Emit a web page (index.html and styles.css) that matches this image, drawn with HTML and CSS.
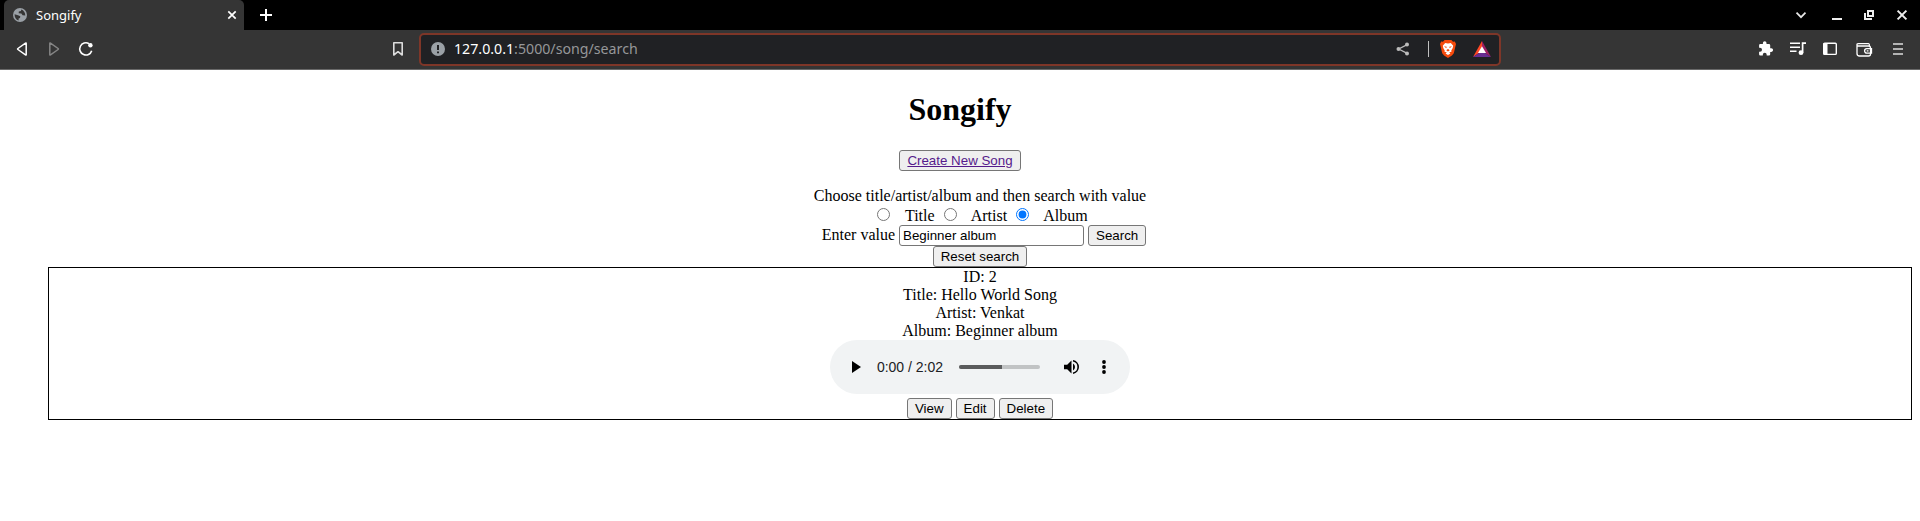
FILE: index.html
```html
<!DOCTYPE html>
<html lang="en">
<head>
<meta charset="utf-8">
<title>Songify</title>
<link rel="stylesheet" href="styles.css">
</head>
<body>
<header class="browser">
  <div class="tabstrip">
    <div class="tab">
      <svg class="favicon" width="14" height="14" viewBox="0 0 14 14"><circle cx="7" cy="7" r="7" fill="#9aa0a6"/><path d="M1.6 6.2 5 7.2 7.3 8.3 7 10 5.600 10.6V12.400C3 11.700 1.500 9.500 1.600 6.200ZM8.200 1.600 8 3 5.800 3.600 5.700 5.200 8.400 5.400 9.600 7.300 12.300 7.500C12.200 4.600 10.700 2.400 8.200 1.600Z" fill="#353535"/></svg>
      <span class="tab-title">Songify</span>
      <svg class="tab-close" width="10" height="10" viewBox="0 0 10 10"><path d="M1.300 1.300 8.700 8.700M8.700 1.300 1.300 8.700" stroke="#fff" stroke-width="1.700"/></svg>
    </div>
    <svg class="new-tab" width="12" height="12" viewBox="0 0 12 12"><path d="M6 0V12M0 6H12" stroke="#fff" stroke-width="2"/></svg>
    <div class="window-controls">
      <svg width="20" height="20" viewBox="0 0 20 20"><path d="M5.500 7.700 10 12.200 14.500 7.700" fill="none" stroke="#e8e8e8" stroke-width="1.700"/></svg>
      <svg width="20" height="20" viewBox="0 0 20 20"><path d="M5 13H15V15H5Z" fill="#eee"/></svg>
      <svg width="20" height="20" viewBox="0 0 20 20"><path d="M9 6H14V11H9ZM6 8V14H13" fill="none" stroke="#eee" stroke-width="2"/></svg>
      <svg width="20" height="20" viewBox="0 0 20 20"><path d="M5.600 5.600 14.400 14.400M14.400 5.600 5.600 14.400" stroke="#eee" stroke-width="2"/></svg>
    </div>
  </div>
  <div class="toolbar">
    <div class="nav">
      <svg width="20" height="20" viewBox="0 0 20 20"><path d="M14.200 4.500V15.500Q14.200 16.300 13.500 15.900L5.900 10.500Q5.200 10 5.900 9.500L13.500 4.100Q14.200 3.700 14.200 4.500Z" fill="none" stroke="#fff" stroke-width="1.500"/></svg>
      <svg width="20" height="20" viewBox="0 0 20 20"><path d="M5.800 4.500V15.500Q5.800 16.300 6.500 15.900L14.100 10.500Q14.800 10 14.100 9.500L6.500 4.100Q5.800 3.700 5.800 4.500Z" fill="none" stroke="#858585" stroke-width="1.500"/></svg>
      <svg width="20" height="20" viewBox="0 0 20 20"><path d="M15.700 11.700A6.100 6.100 0 1 1 13 4.700" fill="none" stroke="#fff" stroke-width="1.600"/><circle cx="14.400" cy="6.200" r="2.200" fill="#fff"/></svg>
    </div>
    <svg class="bookmark" width="20" height="20" viewBox="0 0 20 20"><path d="M5.800 3.800H14.200V16L10 12.700 5.800 16Z" fill="none" stroke="#ddd" stroke-width="1.600" stroke-linejoin="round"/></svg>
    <div class="address">
      <svg class="info" width="14" height="14" viewBox="0 0 14 14"><circle cx="7" cy="7" r="7" fill="#9aa0a6"/><path d="M6 3H8V8H6ZM6 9.400H8V11.300H6Z" fill="#202124"/></svg>
      <span class="url"><span class="host">127.0.0.1</span>:5000/song/search</span>
      <svg class="share" width="14" height="14" viewBox="0 0 14 14"><path d="M11.200 2.600 2.700 7 11.200 11.400" fill="none" stroke="#bbb" stroke-width="1.300"/><g fill="#bbb"><circle cx="11" cy="2.600" r="2"/><circle cx="2.500" cy="7" r="2"/><circle cx="11" cy="11.400" r="2"/></g></svg>
      <span class="divider"></span>
      <svg class="brave" width="16" height="18" viewBox="0 0 16 18"><path d="M4.600 0H11.400L13 1.700 14.800 1.500 16 4 15.500 6 13.800 13.200 11.900 15.400 8 18 4.100 15.400 2.200 13.200.5 6 0 4 1.200 1.500 3 1.700Z" fill="#f54a0c"/><path d="M5.200 3 8 3.500 10.800 3 13.200 5.700 12.700 8 11.300 10.500 11.500 11.800 9.200 12.300 10.400 13.400 8 15 5.600 13.400 6.800 12.300 4.500 11.800 4.700 10.500 3.300 8 2.800 5.700Z" fill="#fff"/><path d="M4 6.300 6.700 6.800 6.300 8.200ZM12 6.300 9.300 6.800 9.700 8.200ZM7.200 9.300H8.800L9.600 10.600 8 11.500 6.400 10.600Z" fill="#f54a0c"/></svg>
      <svg class="rewards" width="18" height="16" viewBox="0 0 18 16"><path d="M9 0 0 16 9 10Z" fill="#ff4724"/><path d="M9 0 18 16 9 10Z" fill="#9e1f63"/><path d="M0 16H18L9 10Z" fill="#662d91"/><path d="M9 5.200 13 12H5Z" fill="#fff"/></svg>
    </div>
    <div class="extensions">
      <svg width="20" height="20" viewBox="0 0 20 20"><path d="M15.300 9.300H14.200V6.300Q14.200 5 12.900 5H10.500V4.100A1.800 1.800 0 0 0 6.900 4.100V5H4.300Q3.100 5 3.100 6.300V8.700H4A2 2 0 0 1 4 12.700H3.100V15.300Q3.100 16.600 4.300 16.600H6.800V15.700A1.950 1.950 0 0 1 10.700 15.700V16.600H12.900Q14.200 16.600 14.200 15.300V12.900H15.300A1.800 1.800 0 0 0 15.300 9.300Z" fill="#fff"/></svg>
      <svg width="20" height="20" viewBox="0 0 20 20"><path d="M2 4.200H12M2 8.200H12M2 12.200H8.500" stroke="#fff" stroke-width="1.400"/><path d="M18 4.200H14.600V13.800" fill="none" stroke="#fff" stroke-width="1.700"/><circle cx="13" cy="13.700" r="2.400" fill="#fff"/></svg>
      <svg width="20" height="20" viewBox="0 0 20 20"><rect x="3.700" y="4.200" width="12.600" height="11.200" rx="1" fill="none" stroke="#fff" stroke-width="1.400"/><path d="M3.500 4H7.500V15.500H3.500Z" fill="#fff"/></svg>
      <svg width="20" height="20" viewBox="0 0 20 20"><path d="M3 6V14.500Q3 17 5.500 17H14.500Q16.500 17 16.500 15.200V9Q16.500 7 14.500 7H4.500Q2.800 7 3 5.200Q3.300 4.700 4.500 4.700H14.500Q15.500 4.700 15.500 6.700M17.500 9.700H12.800A2.200 2.200 0 0 0 12.800 14.100H17.500Z" fill="none" stroke="#fff" stroke-width="1.300"/><path d="M12.700 11.900H14.500" stroke="#fff" stroke-width="1.300"/></svg>
      <svg width="20" height="20" viewBox="0 0 20 20"><path d="M5 5H15M5 10H15M5 15H15" stroke="#ddd" stroke-width="1.600"/></svg>
    </div>
  </div>
</header>
<main class="page">
  <h1 class="heading">Songify</h1>
  <div class="create"><button class="btn"><a class="link" href="#">Create New Song</a></button></div>
  <section class="content">
    <form class="search">
      <div class="row">Choose title/artist/album and then search with value</div>
      <div class="row choices"><input type="radio" name="field"> &nbsp; Title <input type="radio" name="field"> &nbsp; Artist <input type="radio" name="field" checked> &nbsp; Album</div>
      <div class="row entry">Enter value <input class="value" type="text" value="Beginner album"><button class="btn" type="button">Search</button></div>
    </form>
    <div class="row reset"><button class="btn">Reset search</button></div>
    <article class="song">
      <div class="row">ID: 2</div>
      <div class="row">Title: Hello World Song</div>
      <div class="row">Artist: Venkat</div>
      <div class="row">Album: Beginner album</div>
      <div class="player">
        <svg class="play" width="9" height="12" viewBox="0 0 9 12"><path d="M0 0 9 6 0 12Z"/></svg>
        <span class="time">0:00 / 2:02</span>
        <span class="track"><span class="buffered"></span></span>
        <svg class="volume" width="16" height="14" viewBox="0 0 16 14"><path d="M0 4.700H3.200L7.500.6V13.400L3.200 9.300H0ZM9 3.600Q11 4.700 11 7T9 10.400Z"/><path d="M9 .8A6.300 6.300 0 0 1 9 13.200" fill="none" stroke="#000" stroke-width="1.600"/></svg>
        <svg class="more" width="4" height="14" viewBox="0 0 4 14"><circle cx="2" cy="2" r="1.900"/><circle cx="2" cy="7" r="1.900"/><circle cx="2" cy="12" r="1.900"/></svg>
      </div>
      <div class="actions"><button class="btn">View</button><button class="btn">Edit</button><button class="btn">Delete</button></div>
    </article>
  </section>
</main>
</body>
</html>
```
FILE: styles.css
```css
* { box-sizing: border-box; }
body { margin: 0; background: #fff; color: #000; font: 16px/18px "Liberation Serif", serif; height: 521px; overflow: hidden; }
svg { display: block; flex: none; }
.browser { height: 70px; font-family: "Noto Sans", sans-serif; color: #fff; border-bottom: 1px solid #696969; background: #353535; }
.tabstrip { height: 30px; background: #000; display: flex; align-items: center; padding-left: 4px; }
.tab { width: 240px; height: 30px; padding: 0 7px 0 9px; background: #353535; border-radius: 5px 5px 0 0; display: flex; align-items: center; }
.tab-title { margin-left: 9px; font-size: 13px; flex: 1; }
.new-tab { margin-left: 16px; }
.window-controls { margin-left: auto; padding-right: 8px; display: grid; grid-template-columns: 36px 32px 33px 20px; }
.toolbar { height: 38px; display: flex; align-items: center; padding-left: 12px; }
.nav { display: flex; gap: 12px; }
.bookmark { margin-left: 292px; }
.address { width: 1082px; height: 33px; margin-left: 11px; padding: 0 8px 0 10px; display: flex; align-items: center; background: #202124; border: 2px solid #7e3628; border-radius: 5px; }
.url { margin-left: 9px; font-size: 14.2px; color: #969799; flex: 1; }
.host { color: #fff; }
.divider { width: 1px; height: 16px; margin: 0 11px 0 18px; background: #c0c0c0; }
.rewards { margin-left: 17px; }
.extensions { margin-left: auto; padding-right: 12px; display: grid; grid-template-columns: 32px 32px 34px 34px 20px; }
.page { text-align: center; }
.heading { margin: 21px 0; height: 38px; line-height: 37px; font-size: 32px; }
.create { height: 37px; display: flex; justify-content: center; align-items: flex-start; }
.btn { height: 21px; padding: 1px 7px; font: 13.333px "Liberation Sans", Arial, sans-serif; background: #efefef; color: #000; border: 1px solid #767676; border-radius: 3px; }
.link { color: #551a8b; text-decoration: underline; }
.content { padding: 0 8px 0 48px; }
.row { height: 18px; }
.choices { height: 20px; }
.choices input { margin: 3px 3px 0 5px; }
.entry { height: 21px; display: flex; justify-content: center; gap: 4px; padding-left: 8px; line-height: 19px; }
.value { width: 185px; height: 21px; padding: 1px 3px; border: 1px solid #767676; border-radius: 3px; font: 13.333px "Liberation Sans", Arial, sans-serif; }
.reset { height: 21px; display: flex; justify-content: center; }
.song { height: 153px; border: 1px solid #000; display: flex; flex-direction: column; align-items: center; }
.player { width: 300px; height: 54px; border-radius: 27px; background: #f1f3f4; display: flex; align-items: center; padding: 0 24px 0 22px; }
.time { width: 67px; margin-left: 15.5px; font: 14px "Liberation Sans", Arial, sans-serif; color: #202124; white-space: nowrap; }
.track { width: 81px; height: 4px; margin-left: 15.5px; border-radius: 2px; background: #c1c3c4; overflow: hidden; }
.buffered { display: block; width: 43px; height: 4px; background: #5a5b5c; }
.volume { margin-left: 24px; }
.more { margin-left: auto; }
.actions { display: flex; gap: 4px; padding-top: 4px; }
```
